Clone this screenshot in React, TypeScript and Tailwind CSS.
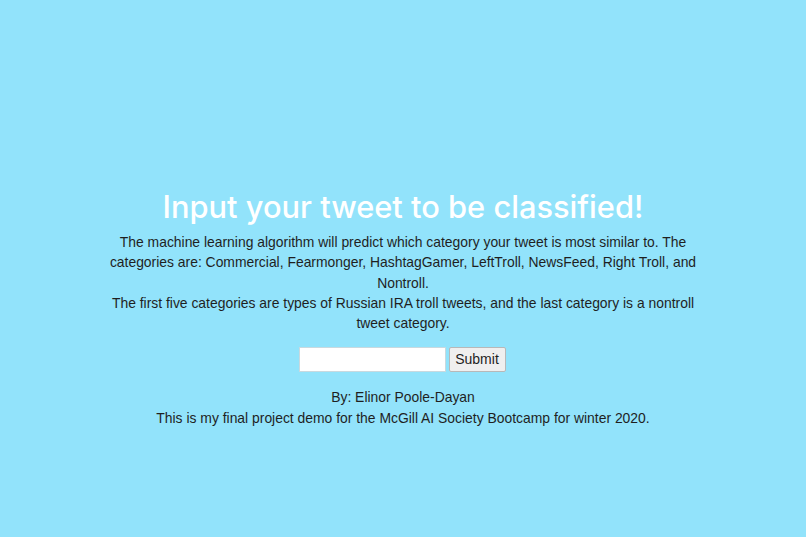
export default function App() {
  return (
    <div className="min-h-[537px] w-full bg-[#92e3fb] flex flex-col items-center pt-[186px]" style={{ fontFamily: "'Liberation Sans', Arial, sans-serif" }}>
      <h1 className="text-white text-[30.8px] leading-[42px] font-medium text-center" style={{ fontFamily: "Inter, 'Liberation Sans', sans-serif" }}>Input your tweet to be classified!</h1>
      <div className="w-[592px] text-center text-[13.9px] leading-[20.3px] text-[#1f1f1f] mt-[4px]">
        <p>The machine learning algorithm will predict which category your tweet is most similar to. The categories are: Commercial, Fearmonger, HashtagGamer, LeftTroll, NewsFeed, Right Troll, and Nontroll.</p>
        <p>The first five categories are types of Russian IRA troll tweets, and the last category is a nontroll tweet category.</p>
      </div>
      <form className="flex items-center gap-[3px] mt-[14px] -translate-x-[1px]" onSubmit={(e) => e.preventDefault()}>
        <input type="text" className="w-[147px] h-[25px] bg-white border border-[#c9d9df] outline-none" />
        <button type="submit" className="h-[25px] w-[57px] bg-[#efefef] border border-[#b8b8b8] rounded-[2px] text-[14px] text-[#1f1f1f]">Submit</button>
      </form>
      <div className="text-center text-[13.9px] leading-[20.3px] text-[#1f1f1f] mt-[15px]">
        <p>By: Elinor Poole-Dayan</p>
        <p>This is my final project demo for the McGill AI Society Bootcamp for winter 2020.</p>
      </div>
    </div>
  );
}
